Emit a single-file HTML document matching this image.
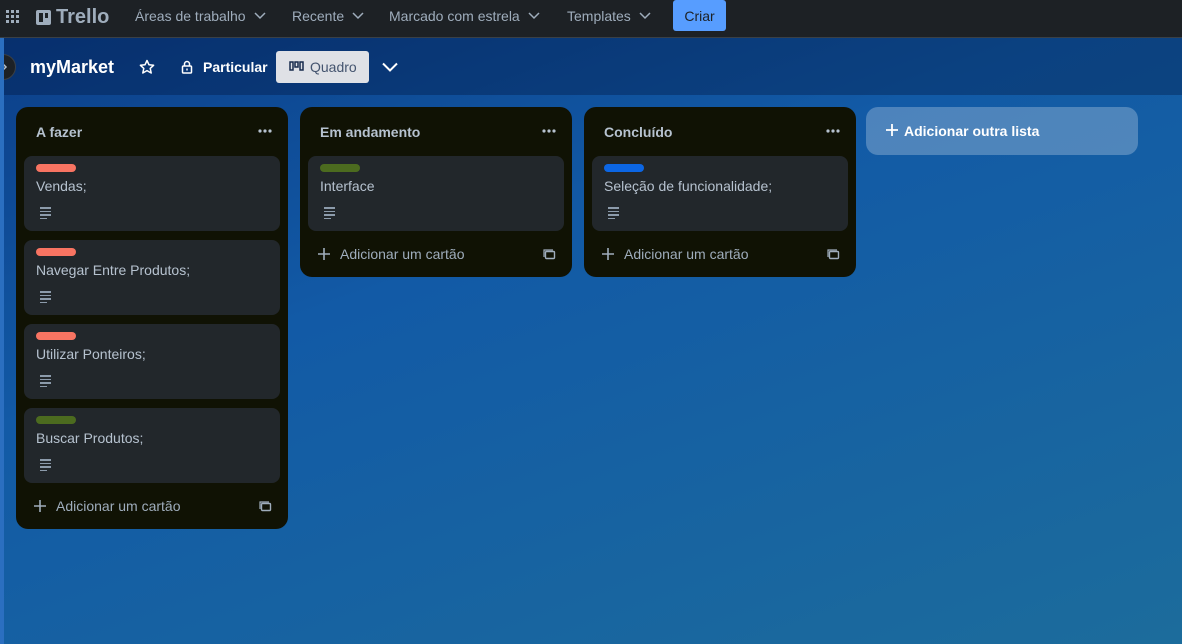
<!DOCTYPE html><html><head><style>
*{box-sizing:border-box;margin:0;padding:0}
body{width:1182px;height:644px;overflow:hidden;font-family:"Liberation Sans",sans-serif;background:linear-gradient(160deg,#0b3c86 0%,#125aa6 40%,#1c6c9c 100%);position:relative;color:#b6c2cf}
.top{position:absolute;left:0;top:0;width:1182px;height:38px;background:#1d2125;border-bottom:1px solid #3a4046;font-size:14px;color:#9fadbc}
.top .it{position:absolute;top:8px;display:flex;align-items:center;gap:8px}
.hdr{position:absolute;left:0;top:38px;width:1182px;height:57px;background:rgba(0,20,60,.35)}
.strip{position:absolute;left:0;top:38px;width:4px;height:606px;background:#2b6fc0}
.list{position:absolute;top:107px;width:272px;background:#101204;border-radius:12px}
.lt{position:absolute;left:20px;top:17px;font-size:14px;font-weight:bold;color:#b6c2cf}
.dots{position:absolute;right:16px;top:22px}
.card{position:absolute;left:8px;width:256px;height:75px;background:#22272b;border-radius:8px}
.lab{position:absolute;left:12px;top:8px;width:40px;height:8px;border-radius:4px}
.ct{position:absolute;left:12px;top:22px;font-size:14px;color:#b6c2cf}
.desc{position:absolute;left:16px;top:51px;width:11px}
.desc i{display:block;height:1.5px;background:#8c9bab;margin-bottom:2px}
.add{position:absolute;left:16px;font-size:14px;color:#9fadbc;display:flex;align-items:center;gap:8px}
.tpl{position:absolute;right:16px}
</style></head><body>
<div class="top">
<div class="it" style="left:6px;top:10px"><svg width="14" height="14"><g fill="#9fadbc"><rect x="0" y="0" width="3" height="3"/><rect x="5" y="0" width="3" height="3"/><rect x="10" y="0" width="3" height="3"/><rect x="0" y="5" width="3" height="3"/><rect x="5" y="5" width="3" height="3"/><rect x="10" y="5" width="3" height="3"/><rect x="0" y="10" width="3" height="3"/><rect x="5" y="10" width="3" height="3"/><rect x="10" y="10" width="3" height="3"/></g></svg></div>
<div class="it" style="left:36px;top:6px;gap:5px"><svg width="15" height="15"><rect width="15" height="15" rx="2" fill="#9fadbc"/><rect x="3" y="3" width="4" height="9" fill="#1d2125"/><rect x="9" y="3" width="3" height="5" fill="#1d2125"/></svg><span style="font-size:20px;font-weight:bold;color:#9fadbc">Trello</span></div>
<div class="it" style="left:135px">Áreas de trabalho <svg width="12" height="8"><path d="M1 1l5 5 5-5" stroke="#9fadbc" stroke-width="1.5" fill="none"/></svg></div>
<div class="it" style="left:292px">Recente <svg width="12" height="8"><path d="M1 1l5 5 5-5" stroke="#9fadbc" stroke-width="1.5" fill="none"/></svg></div>
<div class="it" style="left:389px">Marcado com estrela <svg width="12" height="8"><path d="M1 1l5 5 5-5" stroke="#9fadbc" stroke-width="1.5" fill="none"/></svg></div>
<div class="it" style="left:567px">Templates <svg width="12" height="8"><path d="M1 1l5 5 5-5" stroke="#9fadbc" stroke-width="1.5" fill="none"/></svg></div>
<div style="position:absolute;left:673px;top:0;width:53px;height:31px;background:#579dff;color:#1d2125;border-radius:3px;font-size:14px;display:flex;align-items:center;justify-content:center">Criar</div>
</div>
<div class="hdr">
<div style="position:absolute;left:-10px;top:16px;width:26px;height:26px;border-radius:50%;background:#1d2125;border:1px solid #3a4046"><svg width="26" height="26" style="position:absolute;left:-1px;top:-1px"><path d="M13 10l3 3-3 3" stroke="#b6c2cf" stroke-width="1.5" fill="none"/></svg></div>
<div style="position:absolute;left:30px;top:19px;font-size:18px;font-weight:bold;color:#fff">myMarket</div>
<svg style="position:absolute;left:139px;top:21px" width="16" height="16"><path d="M8 1.5l2 4.3 4.6.5-3.4 3.1 1 4.6L8 11.6 3.8 14l1-4.6L1.4 6.3 6 5.8z" stroke="#fff" stroke-width="1.5" fill="none" stroke-linejoin="round"/></svg>
<svg style="position:absolute;left:181px;top:22px" width="12" height="14"><rect x="1.5" y="6" width="9" height="7" rx="1" stroke="#fff" stroke-width="1.5" fill="none"/><path d="M3.5 6V4a2.5 2.5 0 015 0v2" stroke="#fff" stroke-width="1.5" fill="none"/><rect x="5.3" y="8.5" width="1.4" height="2" fill="#fff"/></svg>
<div style="position:absolute;left:203px;top:21px;color:#fff;font-size:14px;font-weight:bold">Particular</div>
<div style="position:absolute;left:276px;top:13px;width:93px;height:32px;background:#dfe1e6;border-radius:3px;color:#44546f;font-size:14px;padding:8px 0 0 13px;display:flex;gap:6px"><svg width="15" height="12" style="margin-top:2px"><g fill="none" stroke="#172b4d" stroke-width="1.5"><rect x="1" y="1" width="3" height="8"/><rect x="6" y="1" width="3" height="5"/><rect x="11" y="1" width="3" height="8"/></g></svg>Quadro</div>
<svg style="position:absolute;left:382px;top:24px" width="16" height="10"><path d="M1 1.5l7 7 7-7" stroke="#fff" stroke-width="2" fill="none"/></svg>
</div>
<div class="strip"></div>

<div class="list" style="left:16px;height:422px">
<div class="lt">A fazer</div><svg class="dots" width="14" height="4"><circle cx="2" cy="2" r="1.6" fill="#b6c2cf"/><circle cx="7" cy="2" r="1.6" fill="#b6c2cf"/><circle cx="12" cy="2" r="1.6" fill="#b6c2cf"/></svg>
<div class="card" style="top:49px"><div class="lab" style="background:#f87462"></div><div class="ct">Vendas;</div><div class="desc"><i></i><i></i><i></i><i style="width:7px"></i></div></div>
<div class="card" style="top:133px"><div class="lab" style="background:#f87462"></div><div class="ct">Navegar Entre Produtos;</div><div class="desc"><i></i><i></i><i></i><i style="width:7px"></i></div></div>
<div class="card" style="top:217px"><div class="lab" style="background:#f87462"></div><div class="ct">Utilizar Ponteiros;</div><div class="desc"><i></i><i></i><i></i><i style="width:7px"></i></div></div>
<div class="card" style="top:301px"><div class="lab" style="background:#4c6b1f"></div><div class="ct">Buscar Produtos;</div><div class="desc"><i></i><i></i><i></i><i style="width:7px"></i></div></div>
<div class="add" style="top:391px"><svg width="16" height="16"><path d="M8 2v12M2 8h12" stroke="#9fadbc" stroke-width="1.6"/></svg>Adicionar um cartão</div><svg class="tpl" style="top:393px" width="13" height="13"><rect x="2.5" y="3.5" width="9" height="7" rx="1" stroke="#9fadbc" stroke-width="1.4" fill="none"/><path d="M1 9V2h9" stroke="#9fadbc" stroke-width="1.2" fill="none"/></svg>
</div>

<div class="list" style="left:300px;height:170px">
<div class="lt">Em andamento</div><svg class="dots" width="14" height="4"><circle cx="2" cy="2" r="1.6" fill="#b6c2cf"/><circle cx="7" cy="2" r="1.6" fill="#b6c2cf"/><circle cx="12" cy="2" r="1.6" fill="#b6c2cf"/></svg>
<div class="card" style="top:49px"><div class="lab" style="background:#4c6b1f"></div><div class="ct">Interface</div><div class="desc"><i></i><i></i><i></i><i style="width:7px"></i></div></div>
<div class="add" style="top:139px"><svg width="16" height="16"><path d="M8 2v12M2 8h12" stroke="#9fadbc" stroke-width="1.6"/></svg>Adicionar um cartão</div><svg class="tpl" style="top:141px" width="13" height="13"><rect x="2.5" y="3.5" width="9" height="7" rx="1" stroke="#9fadbc" stroke-width="1.4" fill="none"/><path d="M1 9V2h9" stroke="#9fadbc" stroke-width="1.2" fill="none"/></svg>
</div>

<div class="list" style="left:584px;height:170px">
<div class="lt">Concluído</div><svg class="dots" width="14" height="4"><circle cx="2" cy="2" r="1.6" fill="#b6c2cf"/><circle cx="7" cy="2" r="1.6" fill="#b6c2cf"/><circle cx="12" cy="2" r="1.6" fill="#b6c2cf"/></svg>
<div class="card" style="top:49px"><div class="lab" style="background:#0c66e4"></div><div class="ct">Seleção de funcionalidade;</div><div class="desc"><i></i><i></i><i></i><i style="width:7px"></i></div></div>
<div class="add" style="top:139px"><svg width="16" height="16"><path d="M8 2v12M2 8h12" stroke="#9fadbc" stroke-width="1.6"/></svg>Adicionar um cartão</div><svg class="tpl" style="top:141px" width="13" height="13"><rect x="2.5" y="3.5" width="9" height="7" rx="1" stroke="#9fadbc" stroke-width="1.4" fill="none"/><path d="M1 9V2h9" stroke="#9fadbc" stroke-width="1.2" fill="none"/></svg>
</div>

<div style="position:absolute;left:866px;top:107px;width:272px;height:48px;border-radius:12px;background:rgba(255,255,255,.25);color:#fff;font-size:14px;font-weight:bold;padding:16px 0 0 18px;display:flex;gap:4px"><svg width="16" height="16" style="margin-top:-1px"><path d="M8 2v12M2 8h12" stroke="#fff" stroke-width="1.8"/></svg>Adicionar outra lista</div>
</body></html>
